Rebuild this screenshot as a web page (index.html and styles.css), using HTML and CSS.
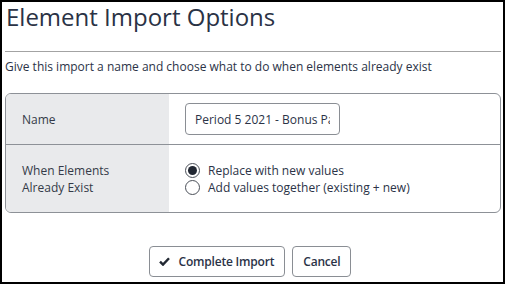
FILE: index.html
```html
<!DOCTYPE html>
<html lang="en">
<head>
  <meta charset="UTF-8">
  <title>Element Import Options</title>
  <link rel="stylesheet" href="styles.css">
</head>
<body>
  <div class="dialog">
    <h1 class="dialogTitle">Element Import Options</h1>
    <hr class="titleRule">
    <p class="intro">Give this import a name and choose what to do when elements already exist</p>

    <div class="optionsPanel">
      <div class="optLabel rowName">Name</div>
      <div class="optValue rowName">
        <input class="nameInput" type="text" value="Period 5 2021 - Bonus Payout">
      </div>

      <div class="optLabel rowExist">When Elements<br>Already Exist</div>
      <div class="optValue rowExist">
        <label class="radioLine">
          <input type="radio" name="existing" checked>
          <span>Replace with new values</span>
        </label>
        <label class="radioLine">
          <input type="radio" name="existing">
          <span>Add values together (existing + new)</span>
        </label>
      </div>
    </div>

    <div class="buttonRow">
      <button class="btn" type="button">
        <svg class="checkIcon" width="11" height="9" viewBox="0 0 11 9">
          <path d="M1 4.6 L4 7.6 L10 1.2" fill="none" stroke="#222833" stroke-width="2.4"/>
        </svg>
        Complete Import
      </button>
      <button class="btn" type="button">Cancel</button>
    </div>
  </div>
</body>
</html>
```

FILE: styles.css
```css
html, body {
  margin: 0;
  padding: 0;
}
body {
  font-family: "Open Sans", "Noto Sans", sans-serif;
  color: #2b3347;
  background: #fff;
}
.dialog {
  box-sizing: border-box;
  width: 505px;
  height: 284px;
  border: 2px solid #000;
  padding: 1px 3px 0 3px;
}
.dialogTitle {
  margin: 0;
  padding-left: 1px;
  font-size: 24px;
  font-weight: 400;
  line-height: 28px;
  color: #2a3245;
}
.titleRule {
  margin: 20px 0 0 0;
  border: 0;
  border-top: 1px solid #a3a3a3;
  height: 0;
  width: 496px;
}
.intro {
  margin: 7px 0 0 0;
  font-size: 12px;
  line-height: 16px;
}
.optionsPanel {
  margin-top: 18px;
  width: 496px;
  box-sizing: border-box;
  border: 1px solid #8d9197;
  border-radius: 6px;
  overflow: hidden;
  display: grid;
  grid-template-columns: 163px 1fr;
  font-size: 12px;
}
.optLabel {
  background: #e9eaec;
  padding-left: 16px;
  display: flex;
  align-items: center;
  line-height: 17px;
  color: #343a48;
}
.optValue {
  padding-left: 16px;
  display: flex;
  flex-direction: column;
  justify-content: center;
}
.rowName {
  height: 50px;
  border-bottom: 1px solid #8d9197;
}
.rowExist {
  height: 67px;
}
.nameInput {
  box-sizing: border-box;
  width: 155px;
  height: 32px;
  border: 1px solid #8a8e94;
  border-radius: 4px;
  padding: 0 9px;
  font-family: inherit;
  font-size: 12px;
  color: #2b3347;
  outline: none;
}
.radioLine {
  display: flex;
  align-items: center;
  height: 17px;
  line-height: 17px;
}
.radioLine input {
  appearance: none;
  box-sizing: border-box;
  width: 15px;
  height: 15px;
  margin: 0 8px 0 0;
  border: 1px solid #4a4f58;
  border-radius: 50%;
  background: #fff;
  display: grid;
  place-content: center;
}
.radioLine input:checked::before {
  content: "";
  width: 9px;
  height: 9px;
  border-radius: 50%;
  background: #222833;
}
.buttonRow {
  margin-top: 33px;
  padding-right: 5px;
  display: flex;
  justify-content: center;
  gap: 7px;
}
.btn {
  box-sizing: border-box;
  height: 31px;
  padding: 0 10px;
  border: 1px solid #8a8e94;
  border-radius: 4px;
  background: #fff;
  font-family: inherit;
  font-size: 12px;
  font-weight: 600;
  letter-spacing: -0.2px;
  color: #2b3347;
  display: flex;
  align-items: center;
}
.checkIcon {
  margin: 0 9px 0 -1px;
}
```
